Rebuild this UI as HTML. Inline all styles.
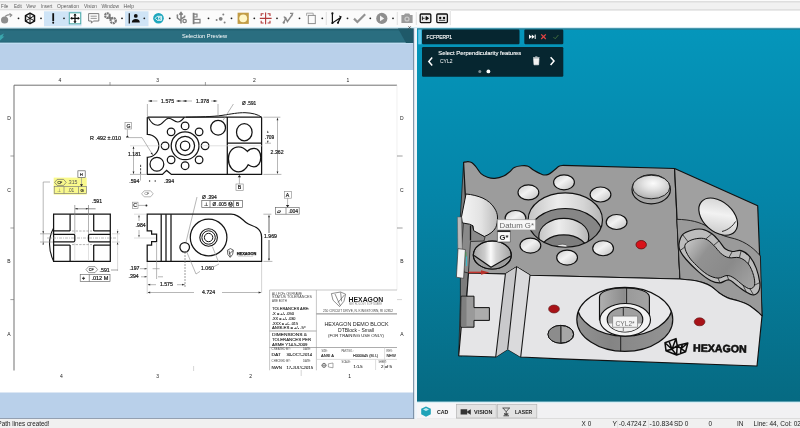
<!DOCTYPE html>
<html lang="en"><head><meta charset="utf-8"><title>Selection Preview</title>
<style>
html,body{margin:0;padding:0;width:800px;height:428px;overflow:hidden;background:#fff}
svg{position:absolute;left:0;top:0;display:block}
text{font-family:"Liberation Sans",sans-serif}
.m{font-size:5.4px;fill:#5c5c5c}
.d{font-size:5.2px;fill:#222;stroke:#222;stroke-width:.2px}
.l{font-size:5px;fill:#222}
.t{font-size:3.1px;fill:#444}
.w{fill:#fff}
.k{fill:none;stroke:#141414;stroke-width:1.25}
.k2{fill:none;stroke:#222;stroke-width:.7}
.g{fill:none;stroke:#909090;stroke-width:.65}
.e{stroke:#222;stroke-width:.8}
</style></head><body>
<svg width="800" height="428" viewBox="0 0 800 428">
<defs>
<linearGradient id="vp" x1="0" y1="0" x2="0" y2="1"><stop offset="0" stop-color="#0596bb"/><stop offset=".45" stop-color="#0585a8"/><stop offset="1" stop-color="#066a82"/></linearGradient>
<linearGradient id="tb" x1="0" y1="0" x2="0" y2="1"><stop offset="0" stop-color="#1d5a6b"/><stop offset=".2" stop-color="#2a6e80"/><stop offset=".85" stop-color="#2a6e80"/><stop offset="1" stop-color="#225f71"/></linearGradient>
<filter id="bl" color-interpolation-filters="sRGB" filterUnits="userSpaceOnUse" x="-6" y="-6" width="812" height="440"><feGaussianBlur stdDeviation="0.35"/></filter>
</defs>
<g filter="url(#bl)">
<!-- window chrome -->
<rect x="-6" y="-6" width="812" height="440" fill="#fff"/>
<rect x="-6" y="-6" width="812" height="16.500" fill="#f1f1f1"/><rect x="-6" y="-6" width="812" height="7" fill="#fbfbfb"/>
<rect x="-6" y="1" width="812" height="1.5" fill="#dedede"/>
<rect x="-6" y="9.3" width="812" height="1.2" fill="#d9d9d9"/>
<rect x="-6" y="10.5" width="457" height="17" fill="#fbfbfb"/>
<rect x="-6" y="27" width="812" height="1.5" fill="#d4ecf5"/>
<g class="m">
<text x="1" y="8.2" textLength="7.2" lengthAdjust="spacingAndGlyphs">File</text><text x="14" y="8.2" textLength="7.8" lengthAdjust="spacingAndGlyphs">Edit</text><text x="26.3" y="8.2" textLength="9.4" lengthAdjust="spacingAndGlyphs">View</text><text x="41" y="8.2" textLength="11.2" lengthAdjust="spacingAndGlyphs">Insert</text><text x="57" y="8.2" textLength="22" lengthAdjust="spacingAndGlyphs">Operation</text><text x="84" y="8.2" textLength="13" lengthAdjust="spacingAndGlyphs">Vision</text><text x="101.5" y="8.2" textLength="17.5" lengthAdjust="spacingAndGlyphs">Window</text><text x="123.5" y="8.2" textLength="10.5" lengthAdjust="spacingAndGlyphs">Help</text>
</g>
<!-- left pane -->
<rect x="-6" y="28.5" width="419.5" height="14.5" fill="url(#tb)"/>
<rect x="-6" y="43" width="419.5" height="27" fill="#b9d0ea"/>
<rect x="-6" y="42.6" width="419.5" height="1.2" fill="#c4e2f4"/>
<rect x="-6" y="70" width="419.5" height="322.5" fill="#fff"/>
<rect x="-6" y="392.5" width="419.5" height="26" fill="#b9d0ea"/>
<rect x="-6" y="418" width="420.500" height="1.200" fill="#7e8ca2"/>
<path d="M0 35.500L4 33.500L2.400 36.600L4.400 36.600L0 40.500Z" fill="#3aa6ad"/>
<path d="M398 28.5 L413.5 28.5 L413.5 43 L406 43Z" fill="#1f5969"/>
<path d="M408.3 26.2l2.6 2.6m0-2.6l-2.6 2.6" stroke="#444" stroke-width=".7" fill="none"/>
<text x="204.5" y="38" text-anchor="middle" class="w" font-size="5.7">Selection Preview</text>
<!-- splitter -->
<rect x="413.300" y="28.500" width="1.100" height="390.600" fill="#54708a"/>
<rect x="414.400" y="28.500" width="2.700" height="390.600" fill="#eef5fb"/>
<!-- right viewport -->
<rect x="417" y="28.5" width="389" height="373.5" fill="url(#vp)"/>
<rect x="417" y="28.400" width="389" height="1.200" fill="#2b7b90"/>
<rect x="417" y="401.6" width="389" height="1.4" fill="#d7eef5"/>
<!-- tab bar + status -->
<rect x="417" y="403" width="389" height="15.5" fill="#f1f1f3"/>
<rect x="-6" y="418.8" width="812" height="15.2" fill="#f0f0f0"/>
<rect x="417" y="418" width="389" height="1" fill="#dcdcdc"/>
<!-- toolbar -->
<g>
<rect x="44" y="11.3" width="37.5" height="15" fill="#cfe4f6"/>
<rect x="125" y="11.3" width="23.5" height="15" fill="#cfe4f6"/>
<g fill="#222">
<circle cx="18.5" cy="18.3" r=".9"/><circle cx="41" cy="18.3" r=".9"/><circle cx="64" cy="18.3" r=".9"/><circle cx="122" cy="18.3" r=".9"/><circle cx="144.3" cy="18.3" r=".9"/><circle cx="169.7" cy="18.3" r=".9"/><circle cx="208.5" cy="18.3" r=".9"/><circle cx="231.5" cy="18.3" r=".9"/><circle cx="254.3" cy="18.3" r=".9"/><circle cx="277" cy="18.3" r=".9"/><circle cx="299.5" cy="18.3" r=".9"/><circle cx="322.3" cy="18.3" r=".9"/><circle cx="347.5" cy="18.3" r=".9"/><circle cx="370.3" cy="18.3" r=".9"/><circle cx="393" cy="18.3" r=".9"/>
</g>
<g stroke="#cfcfcf" stroke-width=".6"><path d="M326.3 12v13M397.3 12v13M416.3 12v13M450.3 11v14"/></g>
<!-- ball with arrow -->
<circle cx="4.6" cy="20" r="3.6" fill="#8e8e8e"/><path d="M5 16.5q3-2.6 6.5-1.6M9.5 13.4l2.3 1.6-1.9 1.8" fill="none" stroke="#8e8e8e" stroke-width="1.1"/>
<!-- hexagon wire -->
<path d="M30 13.200l4.500 2.500v5.400l-4.500 2.500-4.500-2.500v-5.400z" fill="none" stroke="#111" stroke-width="1.500" stroke-linejoin="round"/><path d="M30 13.200v10.200M25.600 15.700l8.800 5.200M34.400 15.700l-8.800 5.200" fill="none" stroke="#111" stroke-width="1"/>
<!-- exclamation -->
<path d="M53.200 13.200v8" stroke="#111" stroke-width="1.800"/><circle cx="53.200" cy="22.700" r="1" fill="#111"/>
<!-- move -->
<rect x="69.3" y="12.8" width="11.4" height="11" fill="#fff" stroke="#4aa9a6" stroke-width="1"/>
<path d="M75 14.2v8.2M70.9 18.3h8.2" stroke="#111" stroke-width="1.3"/><path d="M75 13.4l1.6 2h-3.2zM75 23.2l1.6-2h-3.2zM70.2 18.3l2-1.6v3.2zM79.8 18.3l-2-1.6v3.2z" fill="#111"/>
<!-- comment -->
<path d="M88.6 13.6h10.2v7.4h-5.4l-2 2.2v-2.2h-2.8z" fill="#fafafa" stroke="#7d7d7d" stroke-width="1"/><path d="M90.6 16.2h6.2M90.6 18.4h6.2" stroke="#7d7d7d" stroke-width=".8"/>
<!-- gears -->
<circle cx="107.400" cy="15.600" r="2.300" fill="none" stroke="#7a7a7a" stroke-width="2.200" stroke-dasharray="1.800 .5"/><circle cx="113.200" cy="20.600" r="2.600" fill="none" stroke="#7a7a7a" stroke-width="2.300" stroke-dasharray="1.900 .6"/><path d="M108.600 17l3 2.200" stroke="#7a7a7a" stroke-width="2.400"/>
<!-- person -->
<path d="M129.3 13.2v10.4" stroke="#111" stroke-width="1.3"/><circle cx="135.8" cy="15.9" r="1.9" fill="#111"/><path d="M131.8 22.6q0-3.6 4-3.6t4 3.6z" fill="#111"/>
<!-- teal circle -->
<circle cx="158.5" cy="18.3" r="5.3" fill="#1ea7bd"/><path d="M155.2 18.3l2-2h4.4v4h-4.4z" fill="none" stroke="#fff" stroke-width=".9"/><rect x="158.4" y="17.4" width="2" height="1.8" fill="none" stroke="#fff" stroke-width=".6"/>
<!-- fork -->
<path d="M181 13v10.5M181 21l-3.6-3v-2.2M181 19l3.6-2.2v-1.4M179.4 14.8l1.6-2.2 1.6 2.2" fill="none" stroke="#808080" stroke-width="1.500"/><circle cx="184.6" cy="21" r="1.7" fill="none" stroke="#808080" stroke-width="1.300"/><circle cx="177.4" cy="15.2" r=".9" fill="#8a8a8a"/>
<!-- flag -->
<path d="M193.600 12.800v11.400" fill="none" stroke="#808080" stroke-width="1.800"/><path d="M193.600 14.200h3.400v2.800h-3.400M193.600 19.400h6.400v3.400h-6.400" fill="none" stroke="#808080" stroke-width="1.200"/>
<!-- dots -->
<circle cx="220.7" cy="18.8" r="1.9" fill="#808080"/><circle cx="216.6" cy="20" r="1" fill="#808080"/><circle cx="223.3" cy="14.5" r="1" fill="#808080"/><circle cx="224.6" cy="22.6" r="1" fill="#808080"/>
<!-- gold square -->
<rect x="237.600" y="12.700" width="11.200" height="11.200" fill="#c29c45"/><circle cx="243.200" cy="18.300" r="3.900" fill="#fff6c6"/>
<!-- red crosshair -->
<g fill="none" stroke="#b33a3a" stroke-width="1.1"><path d="M265.6 12.6v11.6M259.8 18.4h11.8"/><path d="M261.2 16v-2.2h2.4M267.6 13.8h2.4v2.2M261.2 20.8v2.2h2.4M267.6 23h2.4v-2.2"/></g>
<!-- polyline gray -->
<path d="M283.6 22.8l2.2-4.6 1.6 3.4 4.6-6.6M290 13.4l2.6 0-.8 2.6M284 16.5l1 1.8" fill="none" stroke="#888" stroke-width="1.400"/><circle cx="283.8" cy="22.6" r="1.200" fill="#888"/>
<!-- copy -->
<path d="M306.6 15.8v-2.6h6.6v7.2" fill="none" stroke="#a0a0a0" stroke-width=".9"/><rect x="308.3" y="15.4" width="7" height="8.2" fill="#fafafa" stroke="#8d8d8d" stroke-width="1"/>
<!-- black polyline -->
<path d="M332.4 13.4v9.6l8.4-5.6-2.8 5.2" fill="none" stroke="#111" stroke-width="1.2"/><circle cx="332.4" cy="13.4" r="1.1" fill="#111"/><circle cx="332.4" cy="23" r="1.1" fill="#111"/><circle cx="338" cy="22.8" r="1.1" fill="#111"/><path d="M339 15.6l2.8 1-1.4 2.4z" fill="#111"/>
<!-- check -->
<path d="M354 18.600l3.400 3.400 7.800-7.800" fill="none" stroke="#929292" stroke-width="2.200"/>
<!-- play -->
<circle cx="381.8" cy="18.4" r="5.6" fill="#8e8e8e"/><path d="M380 15.6l4.2 2.8-4.2 2.8z" fill="#f4f4f4"/>
<!-- camera -->
<path d="M401.4 15h2.6l1-1.6h4.2l1 1.6h2.4v8h-11.2z" fill="#9a9a9a"/><circle cx="407" cy="19" r="2.6" fill="#c9c9c9"/><circle cx="407" cy="19" r="1.3" fill="#9a9a9a"/>
<!-- view icons -->
<rect x="420.2" y="14" width="10.6" height="8.6" rx="1" fill="#e9e9e9" stroke="#111" stroke-width="1.3"/><path d="M422.4 16.4v3.8M422.4 18.3h2.2M426 16.6l2.6 1.7-2.6 1.7z" stroke="#111" stroke-width=".9" fill="#111"/>
<rect x="436.8" y="14" width="10.6" height="8.6" rx="1" fill="#e9e9e9" stroke="#111" stroke-width="1.3"/><circle cx="440.2" cy="18" r="1.2" fill="#111"/><circle cx="444" cy="18" r="1.2" fill="#111"/><path d="M439 20.4h6.2" stroke="#111" stroke-width=".7"/>
</g>
<!-- feature panel -->
<g>
<rect x="418.200" y="29.500" width="3.300" height="14.800" fill="#62c6e6"/>
<rect x="422" y="29.500" width="97.500" height="14.800" rx="1.200" fill="#062630"/>
<rect x="524.300" y="29.500" width="39" height="14.800" rx="1.200" fill="#062630"/>
<rect x="422" y="47" width="141.300" height="29.800" rx="1.200" fill="#062630"/>
<text x="426.400" y="38.900" class="w" stroke="#fff" stroke-width=".15" font-size="5.400" textLength="25.600" lengthAdjust="spacingAndGlyphs">FCFPERP1</text>
<text x="438.300" y="55.200" class="w" stroke="#fff" stroke-width=".12" font-size="6.200" textLength="83" lengthAdjust="spacingAndGlyphs">Select Perpendicularity features</text>
<text x="440" y="63.300" class="w" font-size="5.200" textLength="12.500" lengthAdjust="spacingAndGlyphs">CYL2</text>
<path d="M432.200 57.600l-3.400 3.900 3.400 3.900" fill="none" stroke="#fff" stroke-width="1.500"/>
<path d="M550.600 57.200l3.400 3.900-3.400 3.900" fill="none" stroke="#fff" stroke-width="1.500"/>
<path d="M533.6 58.4h5.4l-.4 6.4h-4.6zM533 57.6h6.6M535.2 56.8h2.2" fill="#f2f2f2" stroke="#f2f2f2" stroke-width=".7"/>
<circle cx="479.8" cy="71.4" r="1.5" fill="#7d8c92"/><circle cx="488.4" cy="71.4" r="1.9" fill="#fff"/>
<path d="M529 34.600l2.800 2.200-2.800 2.200zM531.800 34.600l2.800 2.200-2.800 2.200z" fill="#fff"/><path d="M535.200 34.600v4.400" stroke="#fff" stroke-width="1"/>
<path d="M541.200 34.400l4.600 4.600m0-4.600l-4.600 4.600" stroke="#e04444" stroke-width="1.300" fill="none"/>
<path d="M553.4 37l1.8 1.8 3.2-3.8" stroke="#3f6b3c" stroke-width="1" fill="none"/>
</g>
<!-- tabs -->
<g>
<rect x="417" y="403" width="39" height="15.6" fill="#f6f6f8"/>
<path d="M426 406.4l4.8 2.4v5.4l-4.8 2.6-4.8-2.6v-5.4z" fill="#1fa3b8"/><path d="M426 408l3 1.5-3 1.5-3-1.5z" fill="#bfe9f1"/>
<text x="437" y="413.7" font-size="5" font-weight="bold" fill="#222" textLength="11.4" lengthAdjust="spacingAndGlyphs">CAD</text>
<rect x="456.6" y="404.6" width="39.6" height="13.4" fill="#e3e3e3" stroke="#b5b5b5" stroke-width=".7"/>
<path d="M460.6 409.2h6.6v5.4h-6.6zM467.4 411.2l3.4-2v5.6l-3.4-2z" fill="#333"/>
<text x="474" y="413.7" font-size="5" font-weight="bold" fill="#222" textLength="18.4" lengthAdjust="spacingAndGlyphs">VISION</text>
<rect x="497.4" y="404.6" width="39.4" height="13.4" fill="#e3e3e3" stroke="#b5b5b5" stroke-width=".7"/>
<path d="M502.4 408h7.6M503.2 408.2l3 3.6 3-3.6M506.2 411.8v4M503.4 415.8h5.6M504 413.4l4.4 1.6M508.4 413.4l-4.4 1.6" fill="none" stroke="#333" stroke-width=".8"/>
<text x="515" y="413.7" font-size="5" font-weight="bold" fill="#222" textLength="17.2" lengthAdjust="spacingAndGlyphs">LASER</text>
</g>
<!-- status bar -->
<g font-size="6.400" fill="#1a1a1a">
<text x="-2.4" y="426.300" textLength="52" lengthAdjust="spacingAndGlyphs">Path lines created!</text>
<text x="581.6" y="426.300">X 0</text>
<text x="612.6" y="426.300" textLength="29" lengthAdjust="spacingAndGlyphs">Y -0.4724</text>
<text x="642.6" y="426.300">Z</text>
<text x="649.6" y="426.300" textLength="23.4" lengthAdjust="spacingAndGlyphs">-10.834</text>
<text x="674" y="426.300" textLength="14.4" lengthAdjust="spacingAndGlyphs">SD 0</text>
<text x="708.6" y="426.300">0</text>
<text x="737" y="426.300">IN</text>
<text x="753.6" y="426.300" textLength="51" lengthAdjust="spacingAndGlyphs">Line: 44, Col: 021</text>
</g>
<g stroke="#d0d0d0" stroke-width=".5"><path d="M617.6 420v8M648.6 420v8"/></g>
<!-- engineering drawing -->
<g>
<!-- sheet frame -->
<path d="M14 370.5V85.2H397" fill="none" stroke="#6a6a6a" stroke-width=".95"/>
<path d="M397 85.2V290" fill="none" stroke="#e6e6e6" stroke-width=".6"/>
<g stroke="#777" stroke-width=".7"><path d="M110 82v3.4M205.4 82v3.4M10.4 156h3.6M10.4 228h3.6M10.4 299.6h3.6M397 156h5.6M397 228h5.6"/></g>
<g stroke="#bbb" stroke-width=".6"><path d="M193.6 366v5M301.2 370v6M397 299.6h5"/></g>
<g class="l" text-anchor="middle">
<text x="60" y="81.6">4</text><text x="157.7" y="81.6">3</text><text x="254.4" y="81.6">2</text><text x="348" y="81.6">1</text>
<text x="61.5" y="378">4</text><text x="157.7" y="378">3</text><text x="250.6" y="378">2</text><text x="349.6" y="378">1</text>
<text x="9" y="120.4">D</text><text x="9" y="191.6">C</text><text x="9" y="262.6">B</text><text x="9" y="336.4">A</text>
<text x="401.8" y="120.4">D</text><text x="401.8" y="191.6">C</text><text x="401.8" y="262.6">B</text><text x="401.8" y="336.4">A</text>
</g>

<!-- TOP VIEW -->
<g class="k">
<path d="M147.3 117.2H227.3M147.3 117.2V134.3A11.5 11.5 0 0 1 147.3 157.3V174.4H162.4L166.6 170.4L171.4 174.4H261.6V117.2"/>
<path d="M148.4 117.4C150.4 121.6 153.6 125.2 157.8 125.2C163 125.2 164.6 118.2 168.8 118.2C172.4 118.200 173.800 122 177.600 122C181 122 183 119 184.400 117.200" stroke-width="1.1"/>
<path d="M186 117.2C200 116.9 212 116.8 222 115.4C232 113.8 238 112.6 245 112.7C252 112.9 258 114.4 261.6 117.2" stroke-width="1"/>
<path d="M227.3 117V174.4M227.3 143.2H261.6M227.3 117.2H261.6"/>
<circle cx="185.1" cy="145.8" r="13.9"/><circle cx="185.1" cy="145.8" r="9.5"/><circle cx="185.1" cy="145.8" r="4.7"/>
<circle cx="165.1" cy="145.8" r="3.8"/><circle cx="205.1" cy="145.8" r="3.8"/><circle cx="185.1" cy="125.9" r="3.8"/><circle cx="185.1" cy="165.7" r="3.8"/>
<circle cx="171.1" cy="131.8" r="3.8"/><circle cx="199.1" cy="131.8" r="3.8"/><circle cx="171.1" cy="159.8" r="3.8"/><circle cx="199.1" cy="159.8" r="3.8"/>
<circle cx="156.9" cy="164.3" r="6.9"/>
<circle cx="218.1" cy="127.7" r="7.4"/>
<ellipse cx="244.3" cy="132.2" rx="7.8" ry="8.6"/>
<path d="M228.400 159C228.400 151.600 233 146.800 238.600 146.800C243 146.800 245.600 149.400 247.400 151.400C249 149.600 251.600 148.400 254 148.400C258.400 148.400 260.800 152.600 260.800 157.600C260.800 162.800 258 166.800 254 166.800C251.400 166.800 249.600 165.800 248.200 164.800C246.400 168.400 243 171.800 238.600 171.800C232.800 171.800 228.400 166.400 228.400 159Z" stroke-width="1.35"/>
</g>
<!-- top view dims -->
<g class="g">
<path d="M147.4 104v12M218 104v12M150 101h7.400M176 101h16M211 101h5"/>
<path d="M263.4 117.2h17M263.4 174.4h18M277.5 119v53M265 143.2h6"/>
<path d="M130 145.8h32M199 145.8h64" stroke="#cfcfcf"/>
<path d="M133.5 147.6v26M130 174.4h16M140.5 174.6v6" /><path d="M140.600 164.800v9.400" stroke="#333" stroke-width=".9" stroke-dasharray="2.200 1.200"/>
<path d="M128.6 137.6H142L152.6 154.6"/>
<path d="M127.4 129.4v6M239.4 177v7M287.6 198.2v7"/>
<path d="M223 120.4L233.4 104"/>
<path d="M197 197L185.8 243"/>
</g>
<g fill="#222"><path d="M127.4 135.2l1.6 2.4h-3.2zM239.4 175l1.7 2.3h-3.4zM287.6 207.4l1.7-2.3h-3.4zM277.5 117.6l.9 2.6h-1.8zM277.5 174l.9-2.6h-1.8zM133.5 146.2l.9 2.6h-1.8zM133.5 174l.9-2.6h-1.8zM147.8 101l4-1v2zM217.600 101l-4-1v2zM181.600 101l-4-1v2zM182.400 101l4-1v2zM267.800 130.400l.8 2.400h-1.600zM267.800 143.200l.8-2.400h-1.600zM152.8 155l-2.2-1.6 1.5-1z"/><circle cx="149.6" cy="181" r=".7"/><circle cx="155.2" cy="181" r=".7"/></g>
<g class="d">
<text x="167.6" y="102.8" text-anchor="middle">1.575</text><text x="202.6" y="102.8" text-anchor="middle">1.378</text>
<text x="242" y="105.200" textLength="14.200" lengthAdjust="spacingAndGlyphs">Ø .591</text>
<text x="90" y="139.6" textLength="31" lengthAdjust="spacingAndGlyphs">R .492 ±.010</text>
<text x="128" y="155.6">1.181</text>
<text x="264.800" y="138.600" font-size="4.800">.709</text><text x="270.6" y="153.6">2.362</text>
<text x="129.2" y="182.6">.594</text><text x="164" y="182.6">.394</text>
<text x="126.6" y="127.6">G</text><text x="237.8" y="189.2">B</text><text x="285.8" y="196.8">A</text><text x="133.2" y="207.4">C</text>
<text x="202" y="198.600" textLength="14.600" lengthAdjust="spacingAndGlyphs">Ø .394</text>
<text x="203.600" y="206" font-size="5">⊥</text><text x="212.400" y="206" font-size="4.800" textLength="20.400" lengthAdjust="spacingAndGlyphs">Ø .005 Ⓜ</text><text x="236" y="206" font-size="4.800">B</text>
<text x="277.400" y="213" font-size="5.400">▱</text><text x="288.400" y="213" font-size="5">.004</text>
</g>
<g class="g" stroke="#777">
<rect x="125" y="122.4" width="6.6" height="6.6"/><rect x="236" y="184" width="7.2" height="6.6"/><rect x="284.4" y="191.6" width="7" height="6.6"/><rect x="132.4" y="202.2" width="5.6" height="6.4"/>
<rect x="201.8" y="200.6" width="40.6" height="6.8" stroke="#555"/><path d="M210 200.6v6.8M233.6 200.6v6.8" stroke="#555"/>
<rect x="275.6" y="207.6" width="23.6" height="6.6" stroke="#666"/><path d="M286 207.6v6.6" stroke="#666"/>
<path d="M138 205.4h7.4"/>
<path d="M141.6 193.8l2.6-3h6.4l2.6 3-2.6 3h-6.4z"/>
</g>
<circle cx="146.4" cy="205.4" r="1" fill="#222"/>
<text x="144.4" y="195.3" font-size="3.6" fill="#333">CF</text>

<!-- FRONT VIEW -->
<g class="k">
<path d="M147.2 214.2H231C238 214.2 241 218.4 246 222.4C249.4 225.2 253 225.4 256.4 227.6C259.6 229.8 261.6 232.6 261.6 237V261.4H147.2V245.2H151.6V241.6H156.6V234.2H151.6V230.8H147.2Z"/>
<path d="M161.2 214.2V261.4M166 214.2V261.4M171 214.2V261.4"/>
<circle cx="208.6" cy="237.5" r="18.3"/><circle cx="208.6" cy="237.5" r="8.8" stroke-width="1.1"/><circle cx="208.6" cy="237.5" r="6.7" stroke-width="1"/><circle cx="208.6" cy="237.5" r="4.2" stroke-width="1"/>
<circle cx="184.7" cy="247.3" r="4.8"/>
</g>
<g class="g">
<path d="M263.4 214.2h8M263.4 261.4h9" />
<path d="M269 216v17M269 240v20" stroke="#555" stroke-width=".9"/>
<path d="M134 214.2h12M134 238h22" stroke="#cfcfcf"/>
<path d="M139 217v4M139 230v6"/>
<path d="M147.2 262v32M261.6 262v31" stroke="#bcbcbc"/>
<path d="M156.6 243v36"/>
<path d="M185 252v35" stroke="#666" stroke-dasharray="2 1"/>
<path d="M140 268.7h7M152.6 268.7h7M141 276.8h6M158 276.8h5M148 284.7h8M177 284.7h8M148 292.5h46M222 292.5h39"/>
<path d="M186.4 251L196 274M212.4 246.6L218.6 262M196 274l4-2.6M214 266.6l5-2.6"/>
</g>
<g fill="#333"><path d="M147.6 284.7l2.6-.9v1.8zM184.6 284.7l-2.6-.9v1.8zM147.6 292.5l2.6-.9v1.8zM261.2 292.5l-2.6-.9v1.8zM147 268.7l-2.4-.8v1.6zM147 276.8l-2.4-.8v1.6zM269 214.6l.9 2.6h-1.8zM269 261l.9-2.6h-1.8zM139 214.8l.8 2.4h-1.6zM139 237.6l.8-2.4h-1.6z"/></g>
<g class="d">
<text x="135.6" y="227.4">.984</text>
<text x="264" y="238">1.969</text>
<text x="129.4" y="270.3">.197</text><text x="128.6" y="278.4">.394</text>
<text x="166.4" y="286.4" text-anchor="middle">1.575</text><text x="208.6" y="294.2" text-anchor="middle">4.724</text>
<text x="201" y="270.2">1.060</text>
</g>
<path d="M227.400 250.200l3-1.600 3 1.600-.8 4.200-2.400 3-2.400-3zM229 250.600l1.400 6M233 250.600l-4 3.600" fill="none" stroke="#222" stroke-width=".7"/>
<text x="236.8" y="255" font-size="4.200" font-weight="bold" fill="#111" stroke="#111" stroke-width=".25" textLength="19.600" lengthAdjust="spacingAndGlyphs">HEXAGON</text>
<path d="M238 256.3h15" stroke="#999" stroke-width=".4"/>

<!-- SIDE VIEW -->
<rect x="53.7" y="177.6" width="33" height="17" fill="#f9f98c"/>
<g class="k">
<path d="M53.6 214.2H110.3V261.4H53.6Z"/>
<path d="M70.1 214.2V230.9M70.1 245.1V261.4M93.7 214.2V230.9M93.7 245.1V261.4"/>
<path d="M53.6 230.9H70.1M53.6 245.1H70.1M93.7 230.9H110.3M93.7 245.1H110.3"/>
<path d="M53.6 234.3H73.6Q74.8 234.3 74.8 235.5V240.600Q74.800 241.800 73.600 241.800H53.6M110.3 234.3H89.7Q88.500 234.300 88.500 235.500V240.600Q88.500 241.800 89.700 241.800H110.3"/>
<path d="M53.600 228C49 236.500 47.400 247.500 53.600 261.400" stroke-width="1.100"/>
</g>
<g class="g">
<path d="M74.8 205v9M88.5 205v9" stroke="#777"/><path d="M74.800 214v20M88.500 214v20" stroke="#8a8a8a"/><path d="M74.800 242v19M88.500 242v19" stroke="#d0d0d0"/><path d="M72 231h20M72 244.600h20" stroke="#8a8a8a" stroke-dasharray="2.400 1.200"/>
<path d="M75 208.8h20.600" stroke="#555"/>
<path d="M47 238h70" stroke="#999" stroke-dasharray="3 1 1 1"/>
<path d="M50 182H43.2V243M40 233.800h13M40 242h13"/>
<path d="M117.6 229v42M112 233.800h8M112 242h8" stroke="#c4c4c4"/>
<path d="M111 270h7" stroke="#777"/>
<path d="M81.500 177.600v8"/>
<rect x="77.900" y="170.800" width="7.300" height="6.800" stroke="#555"/>
<rect x="54.200" y="186.600" width="32.300" height="7" stroke="#777"/><path d="M64 186.600v7M78.500 186.600v7" stroke="#777"/>
<path d="M54.600 182.400l2.600-3h6.400l2.600 3-2.600 3h-6.400z" stroke="#666"/>
<path d="M86 269.600l2.600-3h6.400l2.600 3-2.600 3h-6.400z" stroke="#666"/>
<rect x="80.200" y="274.400" width="29.800" height="7.200" stroke="#666"/><path d="M89.300 274.400v7.200" stroke="#666"/>
</g>
<g fill="#222"><path d="M81.500 186.600l1.600-2.300h-3.200zM43.200 233.600l.8-2.400h-1.600zM43.200 242.200l.8 2.400h-1.600zM117.600 233.600l.8-2.400h-1.600zM117.600 242.200l.8 2.400h-1.600zM75.200 208.800l2.400-.8v1.600zM88.300 208.800l-2.400-.8v1.600z"/></g>
<g class="d">
<text x="79.700" y="176.200" font-size="4.200">H</text>
<text x="67.400" y="184" fill="#555" stroke="none">.315</text>
<text x="56.600" y="192.200" font-size="5" fill="#666" stroke="none">⊥</text><text x="67.600" y="192.200" font-size="4.800" fill="#555" stroke="none">.01</text><text x="80.400" y="192.200" font-size="4.200">G</text>
<text x="57.400" y="183.800" font-size="3.600" fill="#555">CF</text>
<text x="92" y="203.200">.591</text>
<text x="88.800" y="271" font-size="3.600">CF</text><text x="99.600" y="271.600">.591</text>
<text x="82.200" y="280.200" font-size="5.400">⌖</text><text x="91.400" y="280.200" font-size="5" textLength="17" lengthAdjust="spacingAndGlyphs">.012 M</text>
</g>
</g>
<!-- title block -->
<g>
<g fill="none" stroke="#8a8a8a" stroke-width=".7">
<path d="M269.600 290V370.300M316.400 290V370.300M269.600 290H397" stroke="#b0b0b0"/>
<path d="M316.400 313.900H397" stroke="#777" stroke-width=".9"/>
<path d="M269.600 331H316.400M269.600 347.500H397"/>
<path d="M384.600 347.500V370M375.600 359.500V370M316.400 359.400H397" stroke="#cfcfcf"/>
</g>
<g class="t">
<text x="272" y="294.600" textLength="30" lengthAdjust="spacingAndGlyphs">ALL FCFs ON FRAME</text>
<text x="272" y="298.400" textLength="40" lengthAdjust="spacingAndGlyphs">STATUS TOLERANCES</text>
<text x="272" y="302.200" textLength="15" lengthAdjust="spacingAndGlyphs">ARE BOTH</text>
<text x="271.600" y="350.200" textLength="19" lengthAdjust="spacingAndGlyphs">CREATED BY:</text><text x="303" y="350.200" textLength="8" lengthAdjust="spacingAndGlyphs">DATE:</text><text x="303" y="361.800" textLength="8" lengthAdjust="spacingAndGlyphs">DATE:</text>
<text x="271.600" y="361.800" textLength="19" lengthAdjust="spacingAndGlyphs">CHECKED BY:</text>
<text x="321.600" y="351.800" textLength="6" lengthAdjust="spacingAndGlyphs">SIZE:</text><text x="341.600" y="351.800" textLength="12" lengthAdjust="spacingAndGlyphs">PART NO.:</text><text x="386.600" y="351.800" textLength="6" lengthAdjust="spacingAndGlyphs">REV:</text>
<text x="341.600" y="363.400" textLength="9" lengthAdjust="spacingAndGlyphs">SCALE:</text><text x="378.600" y="363.400" textLength="8" lengthAdjust="spacingAndGlyphs">SHEET:</text>
<text x="323" y="311.800" textLength="70" lengthAdjust="spacingAndGlyphs" font-size="3.200">250 CIRCUIT DRIVE, N. KINGSTOWN, RI 02852</text>
<text x="349" y="304.600" textLength="33" lengthAdjust="spacingAndGlyphs" font-size="2.600" fill="#888">METROLOGY SOFTWARE</text>
</g>
<g font-size="4.350" fill="#1c1c1c" stroke="#1c1c1c" stroke-width=".1">
<text x="272" y="309.600" textLength="37.400" lengthAdjust="spacingAndGlyphs">TOLERANCES ARE:</text>
<text x="272" y="314.900" textLength="22" lengthAdjust="spacingAndGlyphs">.X = +/- .050</text>
<text x="272" y="319.900" textLength="23.500" lengthAdjust="spacingAndGlyphs">.XX = +/- .030</text>
<text x="272" y="324.500" textLength="26" lengthAdjust="spacingAndGlyphs">.XXX = +/- .015</text>
<text x="272" y="329.200" textLength="33.600" lengthAdjust="spacingAndGlyphs">ANGLES = +/- .5°</text>
<text x="272" y="336.200" textLength="35" lengthAdjust="spacingAndGlyphs">DIMENSIONS &amp;</text>
<text x="272" y="340.900" textLength="39" lengthAdjust="spacingAndGlyphs">TOLERANCES PER</text>
<text x="272" y="345.700" textLength="35.500" lengthAdjust="spacingAndGlyphs">ASME Y14.5-2009</text>
<text x="271.400" y="356.400" textLength="9.500" lengthAdjust="spacingAndGlyphs">DAT</text><text x="286.400" y="356.400" textLength="25.600" lengthAdjust="spacingAndGlyphs">30-OCT-2014</text>
<text x="271.400" y="368.700" textLength="10.500" lengthAdjust="spacingAndGlyphs">NWN</text><text x="286.400" y="368.700" textLength="26.600" lengthAdjust="spacingAndGlyphs">17-JULY-2015</text>
<text x="321" y="357" textLength="13" lengthAdjust="spacingAndGlyphs">ANSI A</text><text x="353" y="357" textLength="25" lengthAdjust="spacingAndGlyphs">H000645 (M.I.)</text><text x="386.400" y="357" textLength="9.600" lengthAdjust="spacingAndGlyphs">NEW</text>
<text x="353.600" y="368.400" textLength="9" lengthAdjust="spacingAndGlyphs">1:1.5</text><text x="381" y="368.400" textLength="11" lengthAdjust="spacingAndGlyphs">2 of 5</text>
</g>
<g font-size="5.400" fill="#222" text-anchor="middle">
<text x="356.500" y="325.800" textLength="64" lengthAdjust="spacingAndGlyphs">HEXAGON DEMO BLOCK</text>
<text x="356" y="331.800" font-size="5" textLength="36" lengthAdjust="spacingAndGlyphs">DTBlock - Small</text>
<text x="356" y="337.400" font-size="4.200" textLength="56" lengthAdjust="spacingAndGlyphs">(FOR TRAINING USE ONLY)</text>
</g>
<text x="348.600" y="302" font-size="6.900" font-weight="bold" fill="#1c1c1c" textLength="34.600" lengthAdjust="spacingAndGlyphs">HEXAGON</text>
<path d="M331.400 293.600l9.200-1.600 5 2.200-1.600 7-4.400 5.400-6.600-6.400zM335 294l5.200 11.600M344.600 294.800l-6.600 7.600M340.600 292.400l1 9" fill="none" stroke="#444" stroke-width=".6"/>
<circle cx="324" cy="365.400" r="2" fill="none" stroke="#333" stroke-width=".6"/><path d="M321.400 365.400h5.200M324 362.800v5.200" stroke="#333" stroke-width=".4"/><path d="M328.400 363.800l4.600-.8v4.800l-4.600-.8z" fill="none" stroke="#555" stroke-width=".5"/>
</g>
<!-- 3D model -->
<defs>
<linearGradient id="hole" x1="0" y1="0" x2="1" y2="1"><stop offset="0" stop-color="#c9c9c9"/><stop offset=".45" stop-color="#f2f2f2"/><stop offset="1" stop-color="#bdbdbd"/></linearGradient>
<linearGradient id="wall" x1="0" y1="0" x2="1" y2="0"><stop offset="0" stop-color="#c4c4c4"/><stop offset=".4" stop-color="#ececec"/><stop offset=".75" stop-color="#d4d4d4"/><stop offset="1" stop-color="#b4b4b4"/></linearGradient>
<linearGradient id="cut" x1="0" y1="0" x2="1" y2="0"><stop offset="0" stop-color="#f4f4f4"/><stop offset=".55" stop-color="#e2e2e2"/><stop offset="1" stop-color="#bcbcbc"/></linearGradient>
<linearGradient id="cone" x1="0" y1="0" x2="1" y2="0"><stop offset="0" stop-color="#a6a6a6"/><stop offset=".3" stop-color="#cccccc"/><stop offset=".46" stop-color="#fbfbfb"/><stop offset=".6" stop-color="#d6d6d6"/><stop offset="1" stop-color="#a2a2a2"/></linearGradient>
<linearGradient id="pock" gradientUnits="userSpaceOnUse" x1="686" y1="238" x2="754" y2="290"><stop offset="0" stop-color="#cacaca"/><stop offset=".28" stop-color="#929292"/><stop offset=".6" stop-color="#8a8a8a"/><stop offset="1" stop-color="#a6a6a6"/></linearGradient>
<radialGradient id="sph" cx=".55" cy=".35" r=".7"><stop offset="0" stop-color="#fbfbfb"/><stop offset=".35" stop-color="#e4e4e4"/><stop offset=".75" stop-color="#c2c2c2"/><stop offset="1" stop-color="#a6a6a6"/></radialGradient>
<linearGradient id="cres" x1="0" y1="0" x2="1" y2="0"><stop offset="0" stop-color="#939393"/><stop offset=".35" stop-color="#848484"/><stop offset=".55" stop-color="#8a8a8a"/><stop offset="1" stop-color="#949494"/></linearGradient>
<linearGradient id="cyl" x1="0" y1="0" x2="1" y2="0"><stop offset="0" stop-color="#b0b0b0"/><stop offset=".5" stop-color="#8c8c8c"/><stop offset=".56" stop-color="#9a9a9a"/><stop offset="1" stop-color="#a4a4a4"/></linearGradient>
<clipPath id="cb1"><ellipse cx="565.3" cy="220" rx="37.2" ry="27.2"/></clipPath>
<clipPath id="cb2"><ellipse cx="563.8" cy="236.600" rx="25" ry="18.300"/></clipPath>
<clipPath id="fb1"><ellipse cx="624.8" cy="319.4" rx="48" ry="32"/></clipPath>
</defs>
<g stroke-linejoin="round">
<!-- left sliver face -->
<path d="M463.6 162.300L460.4 216V300L458.700 355.700L462 356L468.500 273L465.400 196Z" fill="#7c7c7c" stroke="#1a1a1a" stroke-width=".75"/>
<!-- top face -->
<path d="M463.6 162.3C464.3 162.2 466.6 161.5 468.0 161.6C469.4 161.7 470.6 161.8 472.0 162.7C473.4 163.6 474.6 165.2 476.1 167.0C477.6 168.8 479.1 171.9 481.0 173.6C482.9 175.3 485.2 176.5 487.5 177.3C489.8 178.1 492.1 178.6 494.8 178.4C497.5 178.2 501.3 177.1 503.7 176.0C506.1 174.9 507.6 173.4 509.4 172.0C511.2 170.6 512.3 168.5 514.3 167.5C516.3 166.5 519.3 166.0 521.6 165.8C523.9 165.6 526.1 165.4 528.1 166.2C530.1 166.9 531.4 168.9 533.8 170.3C536.2 171.7 540.3 174.0 542.7 174.7C545.1 175.4 546.5 175.1 548.4 174.4C550.3 173.700 552.300 171.700 554.100 170.300C555.900 168.900 557.500 167 559 166.200C560.500 165.400 562.300 165.500 563 165.400L674.600 168.500L680 279L530 275.200L516.600 267L505.400 274L468.500 273L465.400 196Z" fill="#9c9c9c" stroke="#111" stroke-width="1.15"/>
<!-- right/curved face -->
<path d="M674.600 168.500L757.700 205.800L762 316C761.4 315.4 760.6 314.2 758.4 312.4C756.2 310.6 751.9 306.9 748.6 305.0C745.3 303.1 742.2 302.2 738.7 301.0C735.2 299.8 730.6 299.0 727.3 297.6C724.0 296.2 721.7 294.6 719.0 292.7C716.3 290.8 713.7 287.9 711.0 286.2C708.3 284.5 705.8 283.6 703.0 282.6C700.2 281.7 697.2 281.0 694.5 280.5C691.8 280.0 689.4 280.1 687.0 279.8C684.6 279.6 681.2 279.1 680.0 279.0Z" fill="#a0a0a0" stroke="#111" stroke-width="1.15"/>
<path d="M676.800 219.300C690 219.600 700 222 708 227C716 232 722 236 730 237.600C742 240 752 246 760.400 256L762 316C761.4 315.4 760.6 314.2 758.4 312.4C756.2 310.6 751.9 306.9 748.6 305.0C745.3 303.1 742.2 302.2 738.7 301.0C735.2 299.8 730.6 299.0 727.3 297.6C724.0 296.2 721.7 294.6 719.0 292.7C716.3 290.8 713.7 287.9 711.0 286.2C708.3 284.5 705.8 283.6 703.0 282.6C700.2 281.7 697.2 281.0 694.5 280.5C691.8 280.0 689.4 280.1 687.0 279.8C684.6 279.6 681.2 279.1 680.0 279.0Z" fill="#9a9a9a" stroke="#151515" stroke-width=".9"/>
<!-- front face -->
<path d="M468.500 273L505.400 274L516.600 267L530 275.200L680 279C681.2 279.1 684.6 279.6 687.0 279.8C689.4 280.1 691.8 280.0 694.5 280.5C697.2 281.0 700.2 281.7 703.0 282.6C705.8 283.6 708.3 284.5 711.0 286.2C713.7 287.9 716.3 290.8 719.0 292.7C721.7 294.6 724.0 296.2 727.3 297.6C730.6 299.0 735.2 299.8 738.7 301.0C742.2 302.2 745.3 303.1 748.6 305.0C751.9 306.9 756.2 310.6 758.4 312.4C760.6 314.2 761.4 315.4 762.0 316.0L757 366L560 358.900L520.700 357L507.700 349.200L495.700 357L458.700 355.700L461.200 327.400L466.800 296L468.500 273Z" fill="#e5e5e7" stroke="#111" stroke-width="1.15"/>
<!-- groove -->
<path d="M505.400 274L516.600 267L507.700 349.200L495.700 357Z" fill="#c9c9cb"/>
<path d="M516.600 267L530 275.200L520.700 357L507.700 349.200Z" fill="#dadadc"/>
<path d="M505.400 274L495.700 357M516.600 267L507.700 349.200M530 275.200L520.700 357" fill="none" stroke="#1a1a1a" stroke-width="1.1"/>
<!-- T-slot -->
<path d="M461.200 296.200H474V307.600H489.400V320.400H474V327.200H460.800Z" fill="#9a9a9a" stroke="#111" stroke-width="1"/>
<path d="M461.600 296.800H466.500V326.600H461.200Z" fill="#808080"/>
<path d="M475 308.600H488.400V319.400H475Z" fill="#acacac"/>
<!-- left stuff: cutout + bars -->
<path d="M463.500 221L472 224L473.500 230L485 237L484 241L470.500 241.500L468.500 273L464 272L461.500 250Z" fill="#8a8a8a" stroke="#1a1a1a" stroke-width=".75"/>
<path d="M466 194C472 194.500 478 196 483 198.200C488 200.600 492 204 494.400 208C496.400 211 497.400 214 497.500 217C497.600 221 497 224.500 495.800 227.500C493.500 231.500 489.500 234.500 484.400 236.500L473.700 230.700L473 225.800L469.600 224.200L462.300 222.900L461.500 216.800Z" fill="url(#cut)" stroke="#111" stroke-width="1"/>
<path d="M470.500 225.500V240.500" stroke="#111" stroke-width="1.300"/>
<path d="M457.400 217H461.400L462.400 250H457.800Z" fill="#b9b9b9" stroke="#555" stroke-width=".5"/>
<path d="M458 248.600L465.400 249.600L463.600 278.400L456.400 277.200Z" fill="#f2f2f2" stroke="#333" stroke-width=".7"/>
<path d="M466.500 256v10" stroke="#3fb6c4" stroke-width="1.2"/><path d="M465.800 252v5" stroke="#3f9a4a" stroke-width=".8"/>
<!-- top face small holes -->
<g fill="url(#hole)" stroke="#111" stroke-width="1.15">
<ellipse cx="564" cy="182.300" rx="10.400" ry="7.500"/>
<ellipse cx="528.400" cy="192.400" rx="10.400" ry="7.500"/>
<ellipse cx="600.500" cy="194.500" rx="10.400" ry="7.500"/>
<ellipse cx="515.500" cy="218" rx="10.400" ry="7.500"/>
<ellipse cx="616.600" cy="222" rx="10.400" ry="7.500"/>
<ellipse cx="530.400" cy="245.600" rx="10.400" ry="7.500"/>
<ellipse cx="603.100" cy="248.200" rx="10.400" ry="7.500"/>
<ellipse cx="567.100" cy="257.600" rx="10.400" ry="7.500"/>
</g>
<!-- counterbore top -->
<ellipse cx="565.3" cy="220" rx="37.2" ry="27.2" fill="url(#wall)"/>
<g clip-path="url(#cb1)">
<ellipse cx="565.3" cy="235.700" rx="37.2" ry="27.2" fill="#868686" stroke="#111" stroke-width="1.15"/>
<ellipse cx="563.8" cy="236.600" rx="25" ry="18.300" fill="url(#wall)" stroke="#111" stroke-width="1.15"/>
<g clip-path="url(#cb2)"><ellipse cx="563.8" cy="253.200" rx="25" ry="18.300" fill="#7e7e7e" stroke="#111" stroke-width="1.15"/><ellipse cx="562.300" cy="246.200" rx="5" ry="2" fill="#e8e8e8" stroke="#333" stroke-width=".5"/></g>
</g>
<ellipse cx="565.3" cy="220" rx="37.2" ry="27.2" fill="none" stroke="#111" stroke-width="1.15"/>
<!-- spherical pocket -->
<ellipse cx="651.200" cy="189.400" rx="19.200" ry="14.500" fill="#a6a6a6" stroke="#111" stroke-width="1.15"/>
<ellipse cx="651.200" cy="187" rx="18.700" ry="11.800" fill="url(#sph)" stroke="#151515" stroke-width=".9"/>
<!-- cone -->
<ellipse cx="492.300" cy="255" rx="19" ry="14" fill="url(#cone)" stroke="#111" stroke-width="1.15"/>
<path d="M474 255.600L491 267.200L510.700 256C508 263.500 500.500 268.900 492.300 268.900C484 268.900 476.500 263.500 474 255.600Z" fill="#9c9c9c"/>
<path d="M474 255.600L491 267.200L510.700 256" fill="none" stroke="#111" stroke-width="1.250"/>
<ellipse cx="492.300" cy="255" rx="19" ry="14" fill="none" stroke="#111" stroke-width="1.15"/>
<!-- red marks -->
<ellipse cx="641.200" cy="244.700" rx="5.200" ry="4.200" fill="#d8121a" stroke="#6a1414" stroke-width=".9"/>
<ellipse cx="554" cy="309" rx="5.400" ry="4" fill="#a81218" stroke="#5a1a1a" stroke-width=".6"/>
<ellipse cx="699.600" cy="321.800" rx="5.400" ry="4" fill="#a81218" stroke="#5a1a1a" stroke-width=".6"/>
<path d="M468.600 272.400H483" stroke="#c4352f" stroke-width="1.500"/><path d="M481 270.200L489.500 272.500L481 274.800Z" fill="#b8312b"/>
<!-- right face ellipse -->
<ellipse cx="718.200" cy="216.600" rx="22.400" ry="14.800" transform="rotate(42 718.200 216.600)" fill="url(#hole)" stroke="#111" stroke-width="1.15"/>
<path d="M722 231.500C728 230 733 226 735.500 221.500" fill="none" stroke="#151515" stroke-width=".9"/>
<!-- peanut pocket -->
<path d="M679.1 243.5C679.5 240.8 680.5 236.8 682.6 234.6C684.7 232.4 688.2 231.1 691.5 230.2C694.8 229.3 698.8 228.7 702.2 229.3C705.6 229.9 709.1 231.9 711.9 233.8C714.7 235.7 716.8 238.4 719.0 240.9C721.2 243.4 723.0 247.0 725.2 248.8C727.4 250.6 729.6 251.2 732.3 251.5C735.0 251.8 738.2 249.7 741.2 250.6C744.2 251.5 747.5 253.8 750.0 256.8C752.5 259.8 754.7 264.1 756.3 268.4C757.9 272.7 759.3 278.9 759.8 282.6C760.2 286.3 760.0 288.4 759.0 290.5C758.0 292.6 755.7 294.7 753.6 295.0C751.5 295.3 749.1 293.8 746.5 292.3C743.9 290.8 740.7 288.2 737.7 286.1C734.8 284.0 731.8 280.4 728.8 279.9C725.8 279.4 722.9 282.8 719.9 282.9C716.9 283.0 714.5 282.6 711.0 280.8C707.5 279.0 702.7 275.4 698.6 271.9C694.5 268.3 689.3 263.1 686.2 259.5C683.1 255.9 681.2 253.3 680.0 250.6C678.8 247.9 678.7 246.2 679.1 243.5Z" fill="#bcbcbc" stroke="#111" stroke-width="1.15"/>
<path d="M684.8 247.0C684.6 244.5 686.0 243.1 688.0 241.7C690.0 240.3 693.8 239.0 696.8 238.6C699.8 238.2 702.9 237.9 705.7 239.0C708.5 240.1 711.2 242.9 713.7 245.3C716.2 247.7 718.3 251.2 720.8 253.3C723.3 255.4 725.7 257.0 728.8 257.7C731.9 258.4 736.1 256.7 739.4 257.7C742.6 258.7 745.9 260.9 748.3 263.9C750.7 266.9 752.6 271.9 753.6 275.5C754.6 279.1 755.1 283.0 754.5 285.2C753.9 287.4 751.9 288.8 750.0 288.8C748.1 288.8 745.6 287.0 743.0 285.2C740.4 283.4 736.8 279.7 734.1 278.1C731.4 276.5 729.7 275.5 727.0 275.5C724.3 275.5 721.4 278.2 718.1 278.1C714.9 278.0 711.0 276.7 707.5 274.6C704.0 272.5 699.9 268.7 696.8 265.7C693.7 262.7 690.9 259.9 688.9 256.8C686.9 253.7 684.9 249.5 684.8 247.0Z" fill="url(#pock)" stroke="#111" stroke-width="1"/>
<g fill="none" stroke="#1a1a1a" stroke-width=".75"><path d="M682.600 234.600l5.400 7.100M711.900 233.800l-6.200 5.200M719 240.900l-5.300 4.400M732.300 251.500l-3.500 6.200M741.200 250.600l-1.800 7.100M750 256.800l-1.700 7.100M759.800 282.600l-5.300 2.600M753.600 295l-3.600-6.200M746.500 292.300l-3.500-7.100M728.800 279.900l-1.800-4.400M719.900 282.900l-1.800-4.800M680 250.600l4.800-3.600"/></g>
<!-- front face features -->
<ellipse cx="560.800" cy="334.300" rx="12.800" ry="8.900" fill="#a6a6a6" stroke="#111" stroke-width="1"/><path d="M560.800 325.400v17.800" stroke="#151515" stroke-width=".9"/>
<path d="M548 334.300A12.800 8.900 0 0 1 560.800 325.400V343.200A12.800 8.900 0 0 1 548 334.300Z" fill="#8c8c8c"/>
<ellipse cx="560.800" cy="334.300" rx="12.800" ry="8.900" fill="none" stroke="#111" stroke-width="1"/><path d="M560.800 325.400v17.800" stroke="#151515" stroke-width=".9"/>
<!-- front counterbore -->
<ellipse cx="624.8" cy="319.4" rx="48" ry="32" fill="url(#cres)"/>
<g clip-path="url(#fb1)"><ellipse cx="624.8" cy="304.100" rx="48" ry="32" fill="#e8e8ea" stroke="#111" stroke-width="1.15"/></g>
<path d="M620.700 336v15.300" stroke="#151515" stroke-width=".9"/>
<ellipse cx="624.8" cy="319.4" rx="48" ry="32" fill="none" stroke="#111" stroke-width="1.15"/>
<path d="M599.500 320V297C599.500 285 649.400 285 649.400 297V320Z" fill="url(#cyl)" stroke="#111" stroke-width="1.15"/>
<path d="M626.600 288v18" stroke="#151515" stroke-width=".9"/>
<ellipse cx="625.200" cy="319.800" rx="25.300" ry="16.300" fill="#f3f3f3" stroke="#111" stroke-width="1.15"/>
<ellipse cx="625" cy="319.500" rx="17.800" ry="12.300" fill="#a0a0a0" stroke="#111" stroke-width="1.15"/>
<path d="M608.200 323.500A17.800 12.300 0 0 0 641.800 323.500Z" fill="#f0f0f0"/><path d="M623.300 326v5" stroke="#333" stroke-width=".6"/>
<path d="M623.300 308v8" stroke="#1a1a1a" stroke-width=".9"/>
<!-- labels -->
<rect x="497.400" y="219.600" width="38.200" height="10.400" fill="#f6f6f6" stroke="#9a9a9a" stroke-width=".7"/>
<text x="499.600" y="228.300" font-size="7.200" fill="#686868" textLength="34.400" lengthAdjust="spacingAndGlyphs">Datum  G*</text>
<rect x="497.400" y="231.600" width="13" height="10.400" fill="#fafafa" stroke="#555" stroke-width=".7"/>
<rect x="497.400" y="230.400" width="13" height="1.400" fill="#111"/>
<text x="499.400" y="240" font-size="6.800" font-weight="bold" fill="#2a2a2a" textLength="9" lengthAdjust="spacingAndGlyphs">G*</text>
<rect x="612.600" y="316.100" width="25" height="11.200" fill="#f4f4f4" stroke="#777" stroke-width=".7"/>
<text x="615.500" y="325.700" font-size="7.400" fill="#6e6e6e" textLength="19.200" lengthAdjust="spacingAndGlyphs">CYL2*</text>
<!-- hexagon logo -->
<path d="M665 342.800L676 338.600L677.200 345.600L687.800 343L685.600 351.800L676.600 355L666 350.800ZM665 342.800L672 349.200L676 338.600M672 349.200L677.200 345.600L676.600 355L672 349.200L666 350.800M677.200 345.600L685.600 351.800M687.800 343L681 348.600M669 341.300L672 349.200M682.500 344.300L681 348.600L680.500 353.500" fill="none" stroke="#0c0c0c" stroke-width="1.500" stroke-linejoin="round"/>
<text x="693" y="351.600" font-size="10.500" font-weight="bold" fill="#111" stroke="#111" stroke-width=".6" textLength="53.600" lengthAdjust="spacingAndGlyphs" transform="rotate(1 693 351.600)">HEXAGON</text>
</g>
</g>
</svg>
</body></html>
